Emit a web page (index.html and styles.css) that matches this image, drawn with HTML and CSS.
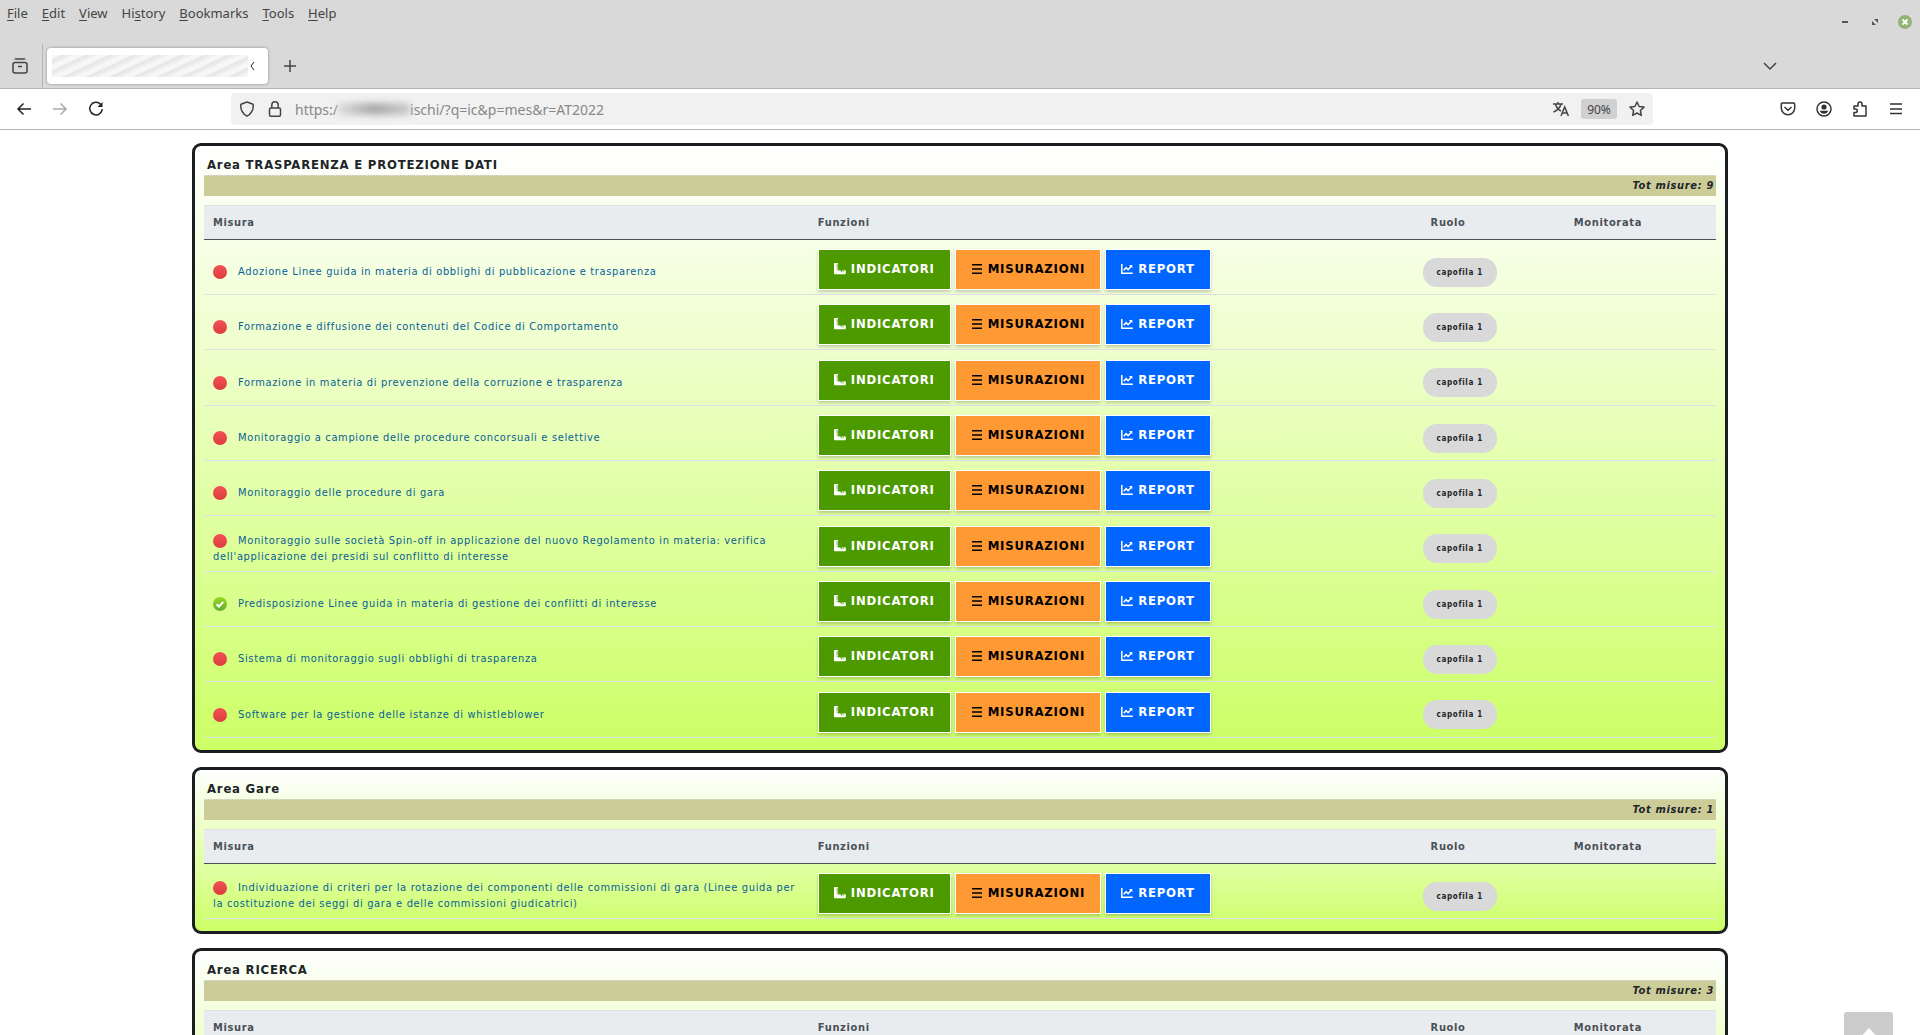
FILE: index.html
```html
<!DOCTYPE html>
<html lang="it">
<head>
<meta charset="utf-8">
<title>Misure</title>
<link rel="stylesheet" href="styles.css">
</head>
<body>
<svg class="defs" aria-hidden="true">
  <defs>
    <linearGradient id="red" x1="0" y1="0" x2="0" y2="1"><stop offset="0" stop-color="#f45255"/><stop offset="1" stop-color="#dc3c3c"/></linearGradient>
    <linearGradient id="green" x1="0" y1="0" x2="0" y2="1"><stop offset="0" stop-color="#9bd91e"/><stop offset="1" stop-color="#5fae35"/></linearGradient>
    <symbol id="todo" viewBox="0 0 14 14"><circle cx="7" cy="7" r="7" fill="url(#red)"/></symbol>
    <symbol id="done" viewBox="0 0 14 14"><circle cx="7" cy="7" r="7" fill="url(#green)"/><path d="M3.600 7.200l2.300 2.300 4.400-4.600" fill="none" stroke="#fff" stroke-width="2"/></symbol>
    <symbol id="ruler" viewBox="0 0 12 12"><path fill="currentColor" d="M.8 0H3.400q.8 0 .8.800V1.500H2.400v.9h1.800v1.200H2.400v.9h1.800v1.200H2.400v.9h1.800v1.200h1V7.200h.9v1.800V7.800h.8V9.200h.8V7.200h1v2h.8V7.200h1.500q.8 0 .8.800v2.400q0 .8-.8.800H.8q-.8 0-.8-.8V.8Q0 0 .8 0z"/></symbol>
    <symbol id="list" viewBox="0 0 12 12"><path fill="currentColor" d="M1 1h10v1.500H1zM1 5.200h10v1.500H1zM1 9.400h10v1.500H1z"/></symbol>
    <symbol id="chart" viewBox="0 0 12 12"><path fill="none" stroke="currentColor" stroke-width="1.500" d="M.8 1v9.200h11M2.800 7.200l2.300-2.500 2 2 3.300-3.600"/><path fill="currentColor" d="M8 2h3.300v3.300z"/></symbol>
  </defs>
</svg>

<header class="browser">
  <div class="titlebar">
    <nav class="menu">
      <button><u>F</u>ile</button><button><u>E</u>dit</button><button><u>V</u>iew</button><button>Hi<u>s</u>tory</button><button><u>B</u>ookmarks</button><button><u>T</u>ools</button><button><u>H</u>elp</button>
    </nav>
    <div class="window-buttons">
      <button aria-label="Minimize"><svg width="14" height="14"><path d="M4 7h6" stroke="#555" stroke-width="2"/></svg></button>
      <button aria-label="Restore"><svg width="14" height="14"><path d="M6 4h4v4zM4 6v4h4z" fill="#555"/></svg></button>
      <button aria-label="Close"><svg width="14" height="14"><circle cx="7" cy="7" r="7" fill="#92b372"/><path d="M4.500 4.500l5 5m0-5l-5 5" stroke="#fff" stroke-width="2"/></svg></button>
    </div>
  </div>
  <div class="tabs">
    <button class="recent" aria-label="Recent browsing"><svg width="16" height="16" fill="none" stroke="#444" stroke-width="1.500"><path d="M3 1.500q0-.5.8-.5h8.400q.8 0 .8.500"/><rect x="1" y="4.500" width="14" height="10.500" rx="2"/><path d="M6 8.500h4"/></svg></button>
    <div class="tab">
      <span class="tab-title"></span>
      <svg width="12" height="12" fill="none" stroke="#222"><path d="M6 2L3 6l3 4"/></svg>
    </div>
    <button class="new-tab" aria-label="New tab"><svg width="14" height="14"><path d="M7 1v12M1 7h12" stroke="#444" stroke-width="1.500"/></svg></button>
    <button class="all-tabs" aria-label="List all tabs"><svg width="14" height="14"><path d="M1 4l6 6 6-6" fill="none" stroke="#444" stroke-width="1.500"/></svg></button>
  </div>
  <div class="toolbar">
    <div class="history">
      <button aria-label="Back"><svg width="16" height="16" fill="none" stroke="#222" stroke-width="1.500"><path d="M15 8H2M7.500 2.500L2 8l5.500 5.500"/></svg></button>
      <button aria-label="Forward"><svg width="16" height="16" fill="none" stroke="#aaa" stroke-width="1.500"><path d="M1 8h13M8.500 2.500L14 8l-5.500 5.500"/></svg></button>
      <button aria-label="Reload"><svg width="16" height="16" fill="none" stroke="#222" stroke-width="1.500"><path d="M12.800 3.500A6.300 6.300 0 1 0 14.300 8"/><path d="M14.500 1v5h-5z" fill="#222" stroke="none"/></svg></button>
    </div>
    <div class="address">
      <svg width="16" height="16" fill="none" stroke="#444" stroke-width="1.500"><path d="M8 1l5.500 2q.8.300.8 1.200c0 5-2.300 8.800-6.300 11-4-2.200-6.300-6-6.300-11q0-.9.800-1.200z"/></svg>
      <svg width="16" height="16" fill="none" stroke="#444" stroke-width="1.500"><rect x="2.500" y="7" width="11" height="8.200" rx="1.500"/><path d="M4.800 7V4a3.200 3.200 0 0 1 6.400 0v3"/></svg>
      <div class="url"><span>https:/</span><span class="smudge"></span><span>ischi/?q=ic&amp;p=mes&amp;r=AT2022</span></div>
      <svg width="16" height="16" fill="none" stroke="#444" stroke-width="1.500"><path d="M0 3h10M5 1v2M2.500 3c1 4 3 6 5.500 7M8 3c-1 4-3.500 6.500-7.500 8M8 15l3.700-9 3.700 9M9.200 12h5"/></svg>
      <button class="zoom-level">90%</button>
      <svg width="16" height="16" fill="none" stroke="#444" stroke-width="1.500" stroke-linejoin="round"><path d="M8 1l2.100 4.500 4.900.6-3.600 3.400.9 4.900L8 12l-4.300 2.400.9-4.900L1 6.100l4.900-.6z"/></svg>
    </div>
    <div class="actions">
      <button aria-label="Pocket"><svg width="16" height="16" fill="none" stroke="#333" stroke-width="1.500"><path d="M2.500 2h11q1.200 0 1.200 1.200V7a6.700 6.700 0 0 1-13.400 0V3.200Q1.300 2 2.500 2zM4.500 6L8 9.300 11.500 6"/></svg></button>
      <button aria-label="Account"><svg width="16" height="16"><circle cx="8" cy="8" r="7" fill="none" stroke="#333" stroke-width="1.500"/><circle cx="8" cy="6" r="2.600" fill="#333"/><path d="M3.800 9.800h8.400q-1 3-4.200 3t-4.200-3z" fill="#333"/></svg></button>
      <button aria-label="Extensions"><svg width="16" height="16" fill="none" stroke="#333" stroke-width="1.500" stroke-linejoin="round"><path d="M2 5h4V3a2 2 0 0 1 4 0v2h4v10H2v-3.500h1.500a1.700 1.700 0 0 0 0-3.500H2z"/></svg></button>
      <button aria-label="Menu"><svg width="16" height="16"><path d="M2 3h12M2 8h12M2 12.500h12" stroke="#333" stroke-width="1.500"/></svg></button>
    </div>
  </div>
</header>

<main class="page" id="page"></main>
<a class="to-top" href="#page" aria-label="Torna su"><svg width="26" height="16"><path d="M13 0l13 14H0z" fill="#fff"/></svg></a>
<script src="app.js"></script>
</body>
</html>
```
FILE: app.js
```js
const areas = [
  { name: "TRASPARENZA E PROTEZIONE DATI", total: 9, measures: [
    ["Adozione Linee guida in materia di obblighi di pubblicazione e trasparenza"],
    ["Formazione e diffusione dei contenuti del Codice di Comportamento"],
    ["Formazione in materia di prevenzione della corruzione e trasparenza"],
    ["Monitoraggio a campione delle procedure concorsuali e selettive"],
    ["Monitoraggio delle procedure di gara"],
    ["Monitoraggio sulle società Spin-off in applicazione del nuovo Regolamento in materia: verifica dell'applicazione dei presidi sul conflitto di interesse"],
    ["Predisposizione Linee guida in materia di gestione dei conflitti di interesse", true],
    ["Sistema di monitoraggio sugli obblighi di trasparenza"],
    ["Software per la gestione delle istanze di whistleblower"]
  ]},
  { name: "Gare", total: 1, measures: [
    ["Individuazione di criteri per la rotazione dei componenti delle commissioni di gara (Linee guida per la costituzione dei seggi di gara e delle commissioni giudicatrici)"]
  ]},
  { name: "RICERCA", total: 3, measures: [] }
];

const icon = (id, cls) => `<svg class="${cls}"><use href="#${id}"/></svg>`;

const row = ([title, done]) => `
  <tr>
    <td>${icon(done ? "done" : "todo", "status")}<a href="#">${title}</a></td>
    <td class="actions-cell"><div class="functions">
      <button class="btn btn-green">${icon("ruler", "glyph")}INDICATORI</button>
      <button class="btn btn-orange">${icon("list", "glyph")}MISURAZIONI</button>
      <button class="btn btn-blue">${icon("chart", "glyph")}REPORT</button>
    </div></td>
    <td><span class="pill">capofila 1</span></td>
    <td></td>
  </tr>`;

document.getElementById("page").innerHTML = areas.map(area => `
  <section class="area${area.measures.length ? "" : " area-pending"}">
    <h2>Area ${area.name}</h2>
    <p class="total">Tot misure: ${area.total}</p>
    <table>
      <thead><tr><th class="wide">Misura</th><th class="wide">Funzioni</th><th class="role">Ruolo</th><th>Monitorata</th></tr></thead>
      <tbody>${area.measures.map(row).join("")}</tbody>
    </table>
  </section>`).join("");
```
FILE: styles.css
```css
* { box-sizing: border-box; }
html { height: 100%; overflow: hidden; }
body {
  margin: 0;
  height: 100%;
  overflow: hidden;
  background: #fff;
  color: #212529;
  font-family: "DejaVu Sans Condensed", "DejaVu Sans", sans-serif;
  font-size: 11px;
}
button { font: inherit; letter-spacing: inherit; color: inherit; border: 0; padding: 0; background: none; }
svg { flex: none; }
.defs { position: absolute; width: 0; height: 0; }

/* Browser chrome */
.browser { font-family: "Noto Sans", sans-serif; font-size: 13px; color: #444; background: #d9d9d9; }
.browser button { display: flex; align-items: center; justify-content: center; }
.titlebar { display: flex; justify-content: space-between; height: 44px; padding: 0 8px 0 7px; }
.menu { display: flex; align-items: flex-start; gap: 14px; padding-top: 4px; }
.browser .menu button { display: block; line-height: 18px; }
.menu u { text-underline-offset: 2px; }
.window-buttons { display: flex; gap: 16px; align-items: center; }
.tabs { display: flex; align-items: center; height: 45px; border-bottom: 1px solid #b4b4b4; }
.browser .recent { width: 43px; height: 44px; padding-right: 3px; border-right: 1px solid #b4b4b4; }
.tab { display: flex; align-items: center; justify-content: space-between; width: 221px; height: 36px; margin: 0 4px; padding: 0 8px 0 5px; background: #fff; border-radius: 4px; box-shadow: 0 0 3px #888; }
.tab-title { width: 198px; height: 22px; background: repeating-linear-gradient(155deg, #f7f7f7 0 3px, #e6e6e6 5px, #eee 8px, #f7f7f7 10px); }
.new-tab { width: 36px; height: 36px; }
.all-tabs { width: 36px; height: 36px; margin-left: auto; margin-right: 132px; }
.toolbar { display: flex; align-items: center; justify-content: space-between; height: 41px; padding: 0 16px; background: #fff; border-bottom: 1px solid #b4b4b4; }
.history { display: flex; gap: 20px; flex: 0 0 215px; }
.address { display: flex; align-items: center; flex: 0 1 1422px; height: 32px; padding: 0 8px; gap: 12px; background: #f1f1f1; border-radius: 4px; }
.url { display: flex; align-items: center; flex: 1; font-size: 14px; color: #888; }
.smudge { width: 72px; height: 12px; background: linear-gradient(90deg, #ddd, #aaa 50%, #ccc); filter: blur(3px); }
.zoom-level { width: 36px; height: 20px; font-size: 12px; background: #d0d0d0; border-radius: 3px; }
.actions { display: flex; gap: 20px; margin-left: auto; }

/* Page */
.page { width: 80%; margin: 13px auto 0; letter-spacing: .06em; }
.area { margin-bottom: 14px; padding: 9px 9px 12px; border: 3px solid #1b1e21; border-radius: 9px; background: linear-gradient(#fff, #cf6); }
.area-pending { min-height: 278px; }
h2 { margin: 0; padding: 0 3px; font-size: 13px; line-height: 20px; font-weight: bold; letter-spacing: .06em; }
.total { margin: 0 0 9px; padding: 0 2px; border-top: 1px dotted #ddd; background: #cc9; font-size: 11px; line-height: 20px; font-weight: bold; font-style: italic; text-align: right; }
table { width: 100%; table-layout: fixed; border-collapse: collapse; }
th { height: 34px; padding: 0 9px; text-align: left; font-size: 11px; color: #495057; background: #e9ecef; border-top: 1px solid #dee2e6; border-bottom: 1px solid #495057; }
.wide { width: 40%; }
th.role { padding-left: 17px; }
td { height: 55px; padding: 14px 9px 4px; line-height: 16px; border-bottom: 1px solid #dee2e6; }
td.actions-cell { padding-top: 9px; }
tr:nth-child(3n) td { height: 56px; }
td a { color: #0b6097; text-decoration: none; }
.status { width: 14px; height: 14px; margin-right: 11px; vertical-align: -4px; }
.functions { display: flex; gap: 4px; }
.btn { display: flex; align-items: center; justify-content: center; gap: 5px; height: 41px; padding: 0 15px 1px; border: 1px solid #fff; font-size: 13px; font-weight: bold; letter-spacing: .06em; box-shadow: 0 2px 3px rgba(0, 0, 0, .2); }
.glyph { width: 12px; height: 12px; }
.btn-green { background: #4c9900; color: #fff; }
.btn-orange { background: #f93; color: #000; }
.btn-blue { background: #06f; color: #fff; }
.pill { display: inline-block; padding: 0 14px; border-radius: 14px; background: #d9d9d9; font-size: 8px; line-height: 29px; font-weight: bold; }
.to-top { position: fixed; right: 27px; bottom: -25px; width: 49px; height: 48px; padding-top: 16px; text-align: center; background: #ccc; border-radius: 3px; }
```
